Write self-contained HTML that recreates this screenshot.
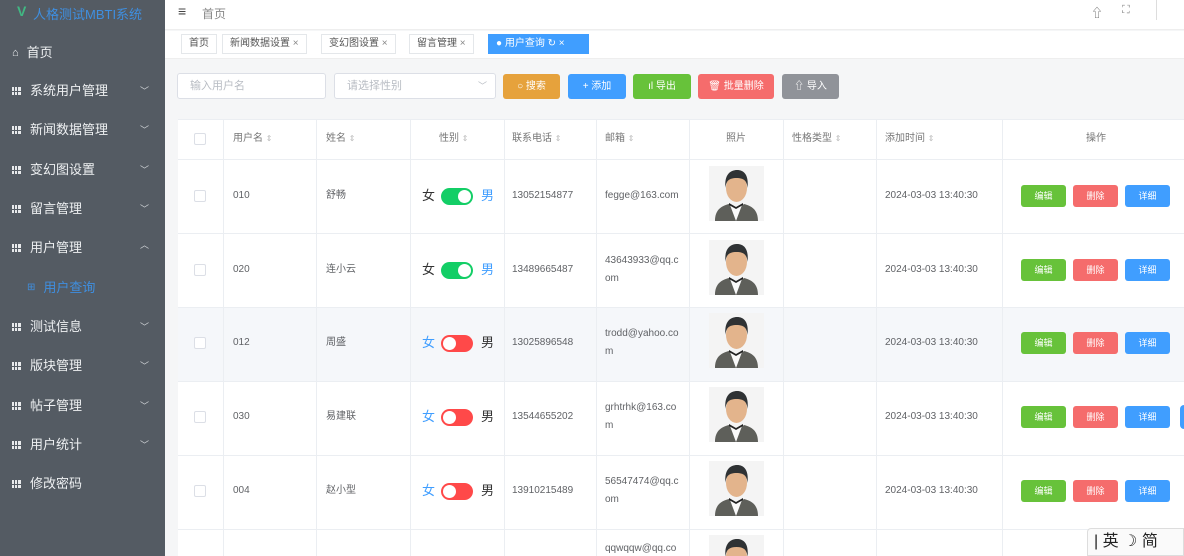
<!DOCTYPE html>
<html style="width:1184px;height:556px;overflow:hidden"><head><meta charset="utf-8"><style>
*{margin:0;padding:0;box-sizing:border-box}
body{width:1184px;height:556px;overflow:hidden;font-family:"Liberation Sans","Noto Sans CJK SC",sans-serif;background:#f5f6f7;position:relative;color:#606266}
.a{position:absolute}
#side{left:0;top:0;width:165px;height:556px;background:#545b63}
.mi{position:absolute;left:12px;font-size:13px;line-height:16px;color:#eef0f2;display:flex;align-items:center}
.mi .ic{display:inline-block;width:9px;height:8px;background:#e8eaec;margin-right:9px;
 background-image:linear-gradient(90deg,transparent 2px,#545b63 2px,#545b63 3px,transparent 3px,transparent 5px,#545b63 5px,#545b63 6px,transparent 6px),linear-gradient(0deg,transparent 3px,#545b63 3px,#545b63 4px,transparent 4px)}
.chev{position:absolute;left:140px;font-size:9px;color:#cfd3d6}
#hdr{left:165px;top:0;width:1019px;height:30px;background:#fff;border-bottom:1px solid #eee}
#tabs{left:165px;top:31px;width:1019px;height:28px;background:#fff;border-bottom:1px solid #eee}
.tab{position:absolute;top:34px;height:20px;border:1px solid #e4e7ea;background:#fff;font-size:10px;color:#555;line-height:18px;padding:0 7px;white-space:nowrap}
.inp{position:absolute;top:73px;height:26px;border:1px solid #dcdfe6;border-radius:3px;background:#fff;font-size:11px;color:#b8bcc3;line-height:24px;padding-left:12px}
.btn{position:absolute;top:74px;height:25px;border-radius:3px;color:#fff;font-size:10px;line-height:25px;text-align:center}
#tbl{left:178px;top:119px;width:1006px;height:437px;background:#fff}
.hl{position:absolute;left:178px;width:1006px;height:1px;background:#ebeef2}
.vl{position:absolute;top:119px;width:1px;height:437px;background:#ebeef2}
.th{position:absolute;top:132px;font-size:10px;line-height:14px;color:#777}
.td{position:absolute;font-size:10px;line-height:14px;color:#606266}
.cb{position:absolute;left:194px;width:12px;height:12px;border:1px solid #dcdfe6;border-radius:2px;background:#fff}
.sw{position:absolute;left:441px;width:32px;height:17px;border-radius:9px}
.sw i{position:absolute;top:2px;width:13px;height:13px;border-radius:50%;background:#fff}
.ab{position:absolute;width:45px;height:22px;border-radius:3px;color:#fff;font-size:9px;line-height:22px;text-align:center}
.s{font-size:8px;color:#bbb}
.g{font-size:13px;line-height:16px}
</style></head><body>
<svg width="0" height="0" style="position:absolute"><defs><symbol id="av" viewBox="0 0 55 55">
<rect width="55" height="55" fill="#f4f4f4"/>
<path d="M6 55 C6 44 12 40 20 38 L27 44 L35 38 C43 40 49 44 49 55Z" fill="#5e5f5a"/>
<path d="M21 39 L27 55 L33 39 L27 42Z" fill="#fafafa"/>
<path d="M20 37 L27 41 L34 37 L34 39 L27 43 L20 39Z" fill="#222"/>
<ellipse cx="27.5" cy="22" rx="10.5" ry="14" fill="#e3b48c"/>
<path d="M16.5 22 C15 8 22 4 28 4 C35 4 40 9 38.5 22 C38 15 35 12 27.5 12 C20 12 17 15 16.5 22Z" fill="#2f3234"/>
</symbol></defs></svg>

<div id="side" class="a">
 <div class="a" style="left:17px;top:3px;font-size:14px;color:#41b883;font-weight:bold">V</div>
 <div class="a" style="left:33px;top:4px;font-size:13px;color:#3f8fe0">人格测试MBTI系统</div>
 <div class="mi" style="top:45px"><span style="font-size:11px;margin-right:8px">⌂</span>首页</div>
 <div class="mi" style="top:83px"><span class="ic"></span>系统用户管理</div><div class="chev" style="top:84px">﹀</div>
 <div class="mi" style="top:122px"><span class="ic"></span>新闻数据管理</div><div class="chev" style="top:123px">﹀</div>
 <div class="mi" style="top:162px"><span class="ic"></span>变幻图设置</div><div class="chev" style="top:163px">﹀</div>
 <div class="mi" style="top:201px"><span class="ic"></span>留言管理</div><div class="chev" style="top:202px">﹀</div>
 <div class="mi" style="top:240px"><span class="ic"></span>用户管理</div><div class="chev" style="top:238px">︿</div>
 <div class="mi" style="top:280px;left:27px;color:#3f8fe0"><span style="font-size:10px;margin-right:8px">⊞</span>用户查询</div>
 <div class="mi" style="top:319px"><span class="ic"></span>测试信息</div><div class="chev" style="top:320px">﹀</div>
 <div class="mi" style="top:358px"><span class="ic"></span>版块管理</div><div class="chev" style="top:359px">﹀</div>
 <div class="mi" style="top:398px"><span class="ic"></span>帖子管理</div><div class="chev" style="top:399px">﹀</div>
 <div class="mi" style="top:437px"><span class="ic"></span>用户统计</div><div class="chev" style="top:438px">﹀</div>
 <div class="mi" style="top:476px"><span class="ic"></span>修改密码</div>
</div>

<div id="hdr" class="a">
 <div class="a" style="left:13px;top:3px;font-size:14px;color:#444">≡</div>
 <div class="a" style="left:37px;top:5px;font-size:12px;color:#888">首页</div>
 <div class="a" style="left:926px;top:4px;font-size:12px;color:#666">⇧</div>
 <div class="a" style="left:957px;top:4px;font-size:11px;color:#888">⛶</div>
 <div class="a" style="left:991px;top:0;width:1px;height:20px;background:#ddd"></div>
</div>
<div id="tabs" class="a"></div>
<div class="tab" style="left:181px">首页</div>
<div class="tab" style="left:222px">新闻数据设置 <span style="color:#888">×</span></div>
<div class="tab" style="left:321px">变幻图设置 <span style="color:#888">×</span></div>
<div class="tab" style="left:409px">留言管理 <span style="color:#888">×</span></div>
<div class="tab" style="left:488px;background:#409eff;border-color:#409eff;color:#fff;width:101px">● 用户查询 ↻ ×</div>

<div class="inp" style="left:177px;width:149px">输入用户名</div>
<div class="inp" style="left:334px;width:162px;padding-left:12px">请选择性别<span style="position:absolute;right:8px;font-size:9px">﹀</span></div>
<div class="btn" style="left:503px;width:57px;background:#e6a23c">○ 搜索</div>
<div class="btn" style="left:568px;width:58px;background:#409eff">+ 添加</div>
<div class="btn" style="left:633px;width:58px;background:#67c23a">ıl 导出</div>
<div class="btn" style="left:698px;width:76px;background:#f56c6c">🗑 批量删除</div>
<div class="btn" style="left:782px;width:57px;background:#909399">⇧ 导入</div>

<div id="tbl" class="a"></div>
<div class="a" style="left:178px;top:307px;width:1006px;height:74px;background:#f5f7fa"></div>
<div class="hl" style="top:119px"></div><div class="hl" style="top:159px"></div><div class="hl" style="top:233px"></div><div class="hl" style="top:307px"></div><div class="hl" style="top:381px"></div><div class="hl" style="top:455px"></div><div class="hl" style="top:529px"></div>
<div class="vl" style="left:223px"></div><div class="vl" style="left:316px"></div><div class="vl" style="left:410px"></div><div class="vl" style="left:504px"></div><div class="vl" style="left:596px"></div><div class="vl" style="left:689px"></div><div class="vl" style="left:783px"></div><div class="vl" style="left:876px"></div><div class="vl" style="left:1002px"></div>

<div class="cb" style="top:133px"></div>
<div class="th" style="left:233px">用户名 <span class="s">⇕</span></div>
<div class="th" style="left:326px">姓名 <span class="s">⇕</span></div>
<div class="th" style="left:439px">性别 <span class="s">⇕</span></div>
<div class="th" style="left:512px">联系电话 <span class="s">⇕</span></div>
<div class="th" style="left:605px">邮箱 <span class="s">⇕</span></div>
<div class="th" style="left:726px">照片</div>
<div class="th" style="left:792px">性格类型 <span class="s">⇕</span></div>
<div class="th" style="left:885px">添加时间 <span class="s">⇕</span></div>
<div class="th" style="left:1086px">操作</div>

<div class="cb" style="top:190px"></div><div class="td" style="left:233px;top:189px">010</div><div class="td" style="left:326px;top:189px">舒畅</div>
<div class="td g" style="left:422px;top:188px;color:#333">女</div><div class="sw" style="top:188px;background:#13ce66"><i style="left:17px"></i></div><div class="td g" style="left:481px;top:188px;color:#409eff">男</div>
<div class="td" style="left:512px;top:189px">13052154877</div><div class="td" style="left:605px;top:189px">fegge@163.com</div>
<svg class="a" style="left:709px;top:166px" width="55" height="55"><use href="#av"/></svg>
<div class="td" style="left:885px;top:189px">2024-03-03 13:40:30</div>

<div class="cb" style="top:264px"></div><div class="td" style="left:233px;top:263px">020</div><div class="td" style="left:326px;top:263px">连小云</div>
<div class="td g" style="left:422px;top:262px;color:#333">女</div><div class="sw" style="top:262px;background:#13ce66"><i style="left:17px"></i></div><div class="td g" style="left:481px;top:262px;color:#409eff">男</div>
<div class="td" style="left:512px;top:263px">13489665487</div><div class="td" style="left:605px;top:252px;line-height:18px;width:78px;word-break:break-all">43643933@qq.com</div>
<svg class="a" style="left:709px;top:240px" width="55" height="55"><use href="#av"/></svg>
<div class="td" style="left:885px;top:263px">2024-03-03 13:40:30</div>

<div class="cb" style="top:337px"></div><div class="td" style="left:233px;top:336px">012</div><div class="td" style="left:326px;top:336px">周盛</div>
<div class="td g" style="left:422px;top:335px;color:#409eff">女</div><div class="sw" style="top:335px;background:#ff4949"><i style="left:2px"></i></div><div class="td g" style="left:481px;top:335px;color:#333">男</div>
<div class="td" style="left:512px;top:336px">13025896548</div><div class="td" style="left:605px;top:325px;line-height:18px;width:78px;word-break:break-all">trodd@yahoo.com</div>
<svg class="a" style="left:709px;top:313px" width="55" height="55"><use href="#av"/></svg>
<div class="td" style="left:885px;top:336px">2024-03-03 13:40:30</div>

<div class="cb" style="top:411px"></div><div class="td" style="left:233px;top:410px">030</div><div class="td" style="left:326px;top:410px">易建联</div>
<div class="td g" style="left:422px;top:409px;color:#409eff">女</div><div class="sw" style="top:409px;background:#ff4949"><i style="left:2px"></i></div><div class="td g" style="left:481px;top:409px;color:#333">男</div>
<div class="td" style="left:512px;top:410px">13544655202</div><div class="td" style="left:605px;top:399px;line-height:18px;width:78px;word-break:break-all">grhtrhk@163.com</div>
<svg class="a" style="left:709px;top:387px" width="55" height="55"><use href="#av"/></svg>
<div class="td" style="left:885px;top:410px">2024-03-03 13:40:30</div>

<div class="cb" style="top:485px"></div><div class="td" style="left:233px;top:484px">004</div><div class="td" style="left:326px;top:484px">赵小型</div>
<div class="td g" style="left:422px;top:483px;color:#409eff">女</div><div class="sw" style="top:483px;background:#ff4949"><i style="left:2px"></i></div><div class="td g" style="left:481px;top:483px;color:#333">男</div>
<div class="td" style="left:512px;top:484px">13910215489</div><div class="td" style="left:605px;top:473px;line-height:18px;width:78px;word-break:break-all">56547474@qq.com</div>
<svg class="a" style="left:709px;top:461px" width="55" height="55"><use href="#av"/></svg>
<div class="td" style="left:885px;top:484px">2024-03-03 13:40:30</div>

<div class="td" style="left:605px;top:542px">qqwqqw@qq.co</div>
<svg class="a" style="left:709px;top:535px" width="55" height="21" viewBox="0 0 55 21"><use href="#av" width="55" height="55"/></svg>

<div class="ab" style="left:1021px;top:185px;background:#67c23a">编辑</div><div class="ab" style="left:1073px;top:185px;background:#f56c6c">删除</div><div class="ab" style="left:1125px;top:185px;background:#409eff">详细</div>
<div class="ab" style="left:1021px;top:259px;background:#67c23a">编辑</div><div class="ab" style="left:1073px;top:259px;background:#f56c6c">删除</div><div class="ab" style="left:1125px;top:259px;background:#409eff">详细</div>
<div class="ab" style="left:1021px;top:332px;background:#67c23a">编辑</div><div class="ab" style="left:1073px;top:332px;background:#f56c6c">删除</div><div class="ab" style="left:1125px;top:332px;background:#409eff">详细</div>
<div class="ab" style="left:1021px;top:406px;background:#67c23a">编辑</div><div class="ab" style="left:1073px;top:406px;background:#f56c6c">删除</div><div class="ab" style="left:1125px;top:406px;background:#409eff">详细</div>
<div class="ab" style="left:1021px;top:480px;background:#67c23a">编辑</div><div class="ab" style="left:1073px;top:480px;background:#f56c6c">删除</div><div class="ab" style="left:1125px;top:480px;background:#409eff">详细</div>
<div class="a" style="left:1180px;top:405px;width:4px;height:24px;border-radius:12px 0 0 12px;background:#409eff"></div>

<div class="a" style="left:1087px;top:528px;width:97px;height:28px;background:#fafafa;border:1px solid #ddd;border-radius:4px 0 0 0;font-size:16px;color:#222;line-height:26px;padding-left:6px;white-space:nowrap">| 英 ☽ 简</div>
</body></html>
